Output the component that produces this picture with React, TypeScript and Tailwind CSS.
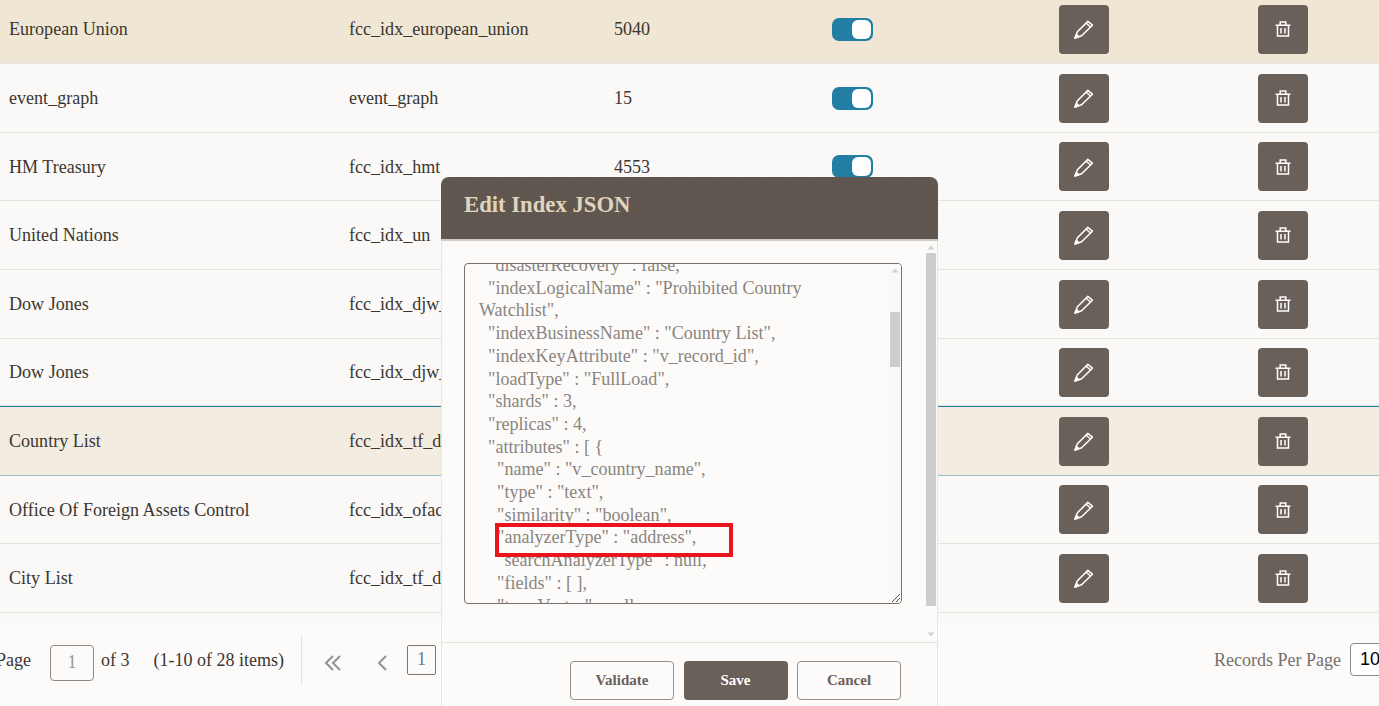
const rows = [
  { name: 'European Union', index: 'fcc_idx_european_union', count: '5040', tone: 'active', height: 'h-[69px]' },
  { name: 'event_graph', index: 'event_graph', count: '15', height: 'h-[69px]' },
  { name: 'HM Treasury', index: 'fcc_idx_hmt', count: '4553', height: 'h-[68px]' },
  { name: 'United Nations', index: 'fcc_idx_un', count: '', height: 'h-[69px]' },
  { name: 'Dow Jones', index: 'fcc_idx_djw_', count: '', height: 'h-[69px]' },
  { name: 'Dow Jones', index: 'fcc_idx_djw_', count: '', height: 'h-[67px]' },
  { name: 'Country List', index: 'fcc_idx_tf_d', count: '', tone: 'selected', height: 'h-[70px]' },
  { name: 'Office Of Foreign Assets Control', index: 'fcc_idx_ofac', count: '', height: 'h-[68px]' },
  { name: 'City List', index: 'fcc_idx_tf_d', count: '', height: 'h-[69px]' },
]

const jsonLines = `  "disasterRecovery" : false,
  "indexLogicalName" : "Prohibited Country Watchlist",
  "indexBusinessName" : "Country List",
  "indexKeyAttribute" : "v_record_id",
  "loadType" : "FullLoad",
  "shards" : 3,
  "replicas" : 4,
  "attributes" : [ {
    "name" : "v_country_name",
    "type" : "text",
    "similarity" : "boolean",
    "analyzerType" : "address",
    "searchAnalyzerType" : null,
    "fields" : [ ],
    "termVector" : null`

function PencilIcon() {
  return (
    <svg width="20" height="20" viewBox="0 0 20 20" fill="none" stroke="#fff" strokeWidth="1.5" strokeLinejoin="round">
      <path d="M1 19 3.4 12.8 13.8 2.4 18.4 6.2 7.6 16.8Z" />
      <path d="M12.2 4.2 16.6 8" />
      <path d="M1 19 2.4 15.4 4.8 17.8Z" fill="#fff" />
    </svg>
  )
}

function TrashIcon() {
  return (
    <svg width="16" height="16" viewBox="0 0 16 16" fill="none" stroke="#fff" strokeWidth="1.5">
      <path d="M0.5 4.2H15.5M5.2 4V1H10.8V4" />
      <path d="M2.5 4.2V15H13.5V4.2" />
      <path d="M6 7V12.5M10 7V12.5" />
    </svg>
  )
}

function Toggle() {
  return (
    <div className="flex h-[23px] w-[41px] items-center justify-end rounded-[7px] bg-[#227fa3] pr-[2px]">
      <div className="h-[19px] w-[19px] rounded-[6px] bg-white" />
    </div>
  )
}

function ScrollArrow({ up }: { up?: boolean }) {
  return (
    <svg width="8" height="5" viewBox="0 0 8 5" fill="#d4d2cf">
      <path d={up ? 'M4 0.5 7.5 4.5H0.5Z' : 'M4 4.5 0.5 0.5H7.5Z'} />
    </svg>
  )
}

function Row({ row }: { row: (typeof rows)[number] }) {
  let tone = 'bg-[#faf9f7] border-b border-[#e5e3e0]'
  if (row.tone === 'active') tone = 'bg-[#efe6d3] border-b border-[#e5e3e0]'
  if (row.tone === 'selected') tone = 'bg-[#f3ece1] border-t border-b border-t-[#1f7f9f] border-b-[#8fbcc8]'

  return (
    <div className={`grid grid-cols-[349px_265px_218px_227px_199px_121px] items-center text-[18.07px] text-[#3b3631] ${row.height} ${tone}`}>
      <div className="pl-[9px] pt-[2px]">{row.name}</div>
      <div className="pt-[2px]">{row.index}</div>
      <div className="pt-[2px]">{row.count}</div>
      <div><Toggle /></div>
      <button className="flex h-[49px] w-[50px] items-center justify-center rounded-[4px] bg-[#6a605a]"><PencilIcon /></button>
      <button className="flex h-[49px] w-[50px] items-center justify-center rounded-[4px] bg-[#6a605a]"><TrashIcon /></button>
    </div>
  )
}

function Pagination() {
  return (
    <div className="flex h-[83px] items-center justify-between bg-[#fcfbf9] pb-[4px]">
      <div className="flex items-center text-[18px] text-[#3b3631]">
        <span className="-ml-[4px] mb-[4px]">Page</span>
        <div className="ml-[19px] flex h-[36px] w-[44px] items-center justify-center rounded-[4px] border border-[#8f8a85] text-[#9a9590]">1</div>
        <span className="mb-[4px] ml-[7px]">of 3</span>
        <span className="mb-[4px] ml-[24px]">(1-10 of 28 items)</span>
        <div className="mb-[5px] ml-[17px] h-[50px] w-px bg-[#e5e3e0]" />
        <svg className="ml-[22px] mt-[1px]" width="18" height="16" viewBox="0 0 18 16" fill="none" stroke="#8e9499" strokeWidth="2">
          <path d="M9 1 2 8l7 7M16 1 9 8l7 7" />
        </svg>
        <svg className="ml-[34px] mt-[1px]" width="12" height="16" viewBox="0 0 12 16" fill="none" stroke="#8e9499" strokeWidth="2">
          <path d="M10 1 3 8l7 7" />
        </svg>
        <div className="mb-[6px] ml-[19px] flex h-[30px] w-[29px] items-center justify-center rounded-[2px] border border-[#7d7772] text-[#5d7d8f]">1</div>
      </div>
      <div className="-mr-[11px] flex items-center text-[18px] text-[#75706b]">
        <span className="mb-[4px]">Records Per Page</span>
        <div className="mb-[7px] ml-[9px] flex h-[33px] w-[40px] items-center rounded-l-[4px] border border-[#8f8a85] bg-white pl-[9px] font-['Liberation_Sans',sans-serif] text-black">10</div>
      </div>
    </div>
  )
}

function EditModal() {
  return (
    <div className="absolute left-[441px] top-[177px] h-[560px] w-[497px] rounded-t-[8px] bg-[#fcfbf9] shadow-[inset_1px_0_0_#e8e6e3,inset_-1px_0_0_#e8e6e3]">
      <div className="flex h-[64px] items-center rounded-t-[8px] border-b-2 border-[#cfcbc6] bg-[#5f574f] bg-[repeating-linear-gradient(90deg,rgba(255,255,255,0.02)_0_1px,transparent_1px_3px),repeating-linear-gradient(0deg,rgba(0,0,0,0.03)_0_1px,transparent_1px_3px)] pb-[6px] pl-[23px] text-[22.7px] font-bold text-[#e0d4bc]">
        Edit Index JSON
      </div>

      <div className="relative h-[402px] border-b border-[#e5e3e0] pl-[23px] pt-[22px]">
        <div className="relative h-[341px] w-[438px] overflow-hidden rounded-[4px] border border-[#76716c]">
          <div className="-mt-[10px] whitespace-pre-wrap pl-[14px] pr-[20px] text-[18.07px] leading-[22.7px] text-[#8a8580]">{jsonLines}</div>
          <div className="absolute bottom-0 right-0 top-0 w-[12px] bg-[#faf9f7]">
            <div className="ml-[2px] mt-[4px] flex"><ScrollArrow up /></div>
            <div className="ml-px mt-[39px] h-[55px] w-[10px] bg-[#cdcdcd]" />
          </div>
          <svg className="absolute bottom-0 right-0" width="11" height="11" viewBox="0 0 11 11" stroke="#55514d" strokeWidth="1">
            <path d="M2 10 10 2M6 10l4-4" />
          </svg>
        </div>

        <div className="absolute left-[54px] top-[282px] h-[34px] w-[238px] border-4 border-[#e8161c]" />

        <div className="absolute right-0 top-0 flex h-full w-[12px] flex-col items-start">
          <div className="ml-px mt-[4px] flex"><ScrollArrow up /></div>
          <div className="mt-[3px] h-[353px] w-[10px] bg-[#cdcdcd]" />
          <div className="ml-px mt-[26px] flex"><ScrollArrow /></div>
        </div>
      </div>

      <div className="flex gap-[9.5px] pl-[129px] pt-[18px]">
        <button className="h-[39px] w-[104px] rounded-[4px] border border-[#96918c] text-[15px] font-bold text-[#6a605a]">Validate</button>
        <button className="h-[39px] w-[104px] rounded-[4px] bg-[#6a605a] text-[15px] font-bold text-white">Save</button>
        <button className="h-[39px] w-[104px] rounded-[4px] border border-[#96918c] text-[15px] font-bold text-[#6a605a]">Cancel</button>
      </div>
    </div>
  )
}

export default function App() {
  return (
    <div className="relative h-[706px] w-[1379px] overflow-hidden bg-[#faf9f7] font-['Liberation_Serif',serif]">
      <div className="-mt-[5px]">
        {rows.map((row, i) => (
          <Row key={i} row={row} />
        ))}
      </div>
      <div className="mt-[10px]">
        <Pagination />
      </div>
      <EditModal />
    </div>
  )
}
